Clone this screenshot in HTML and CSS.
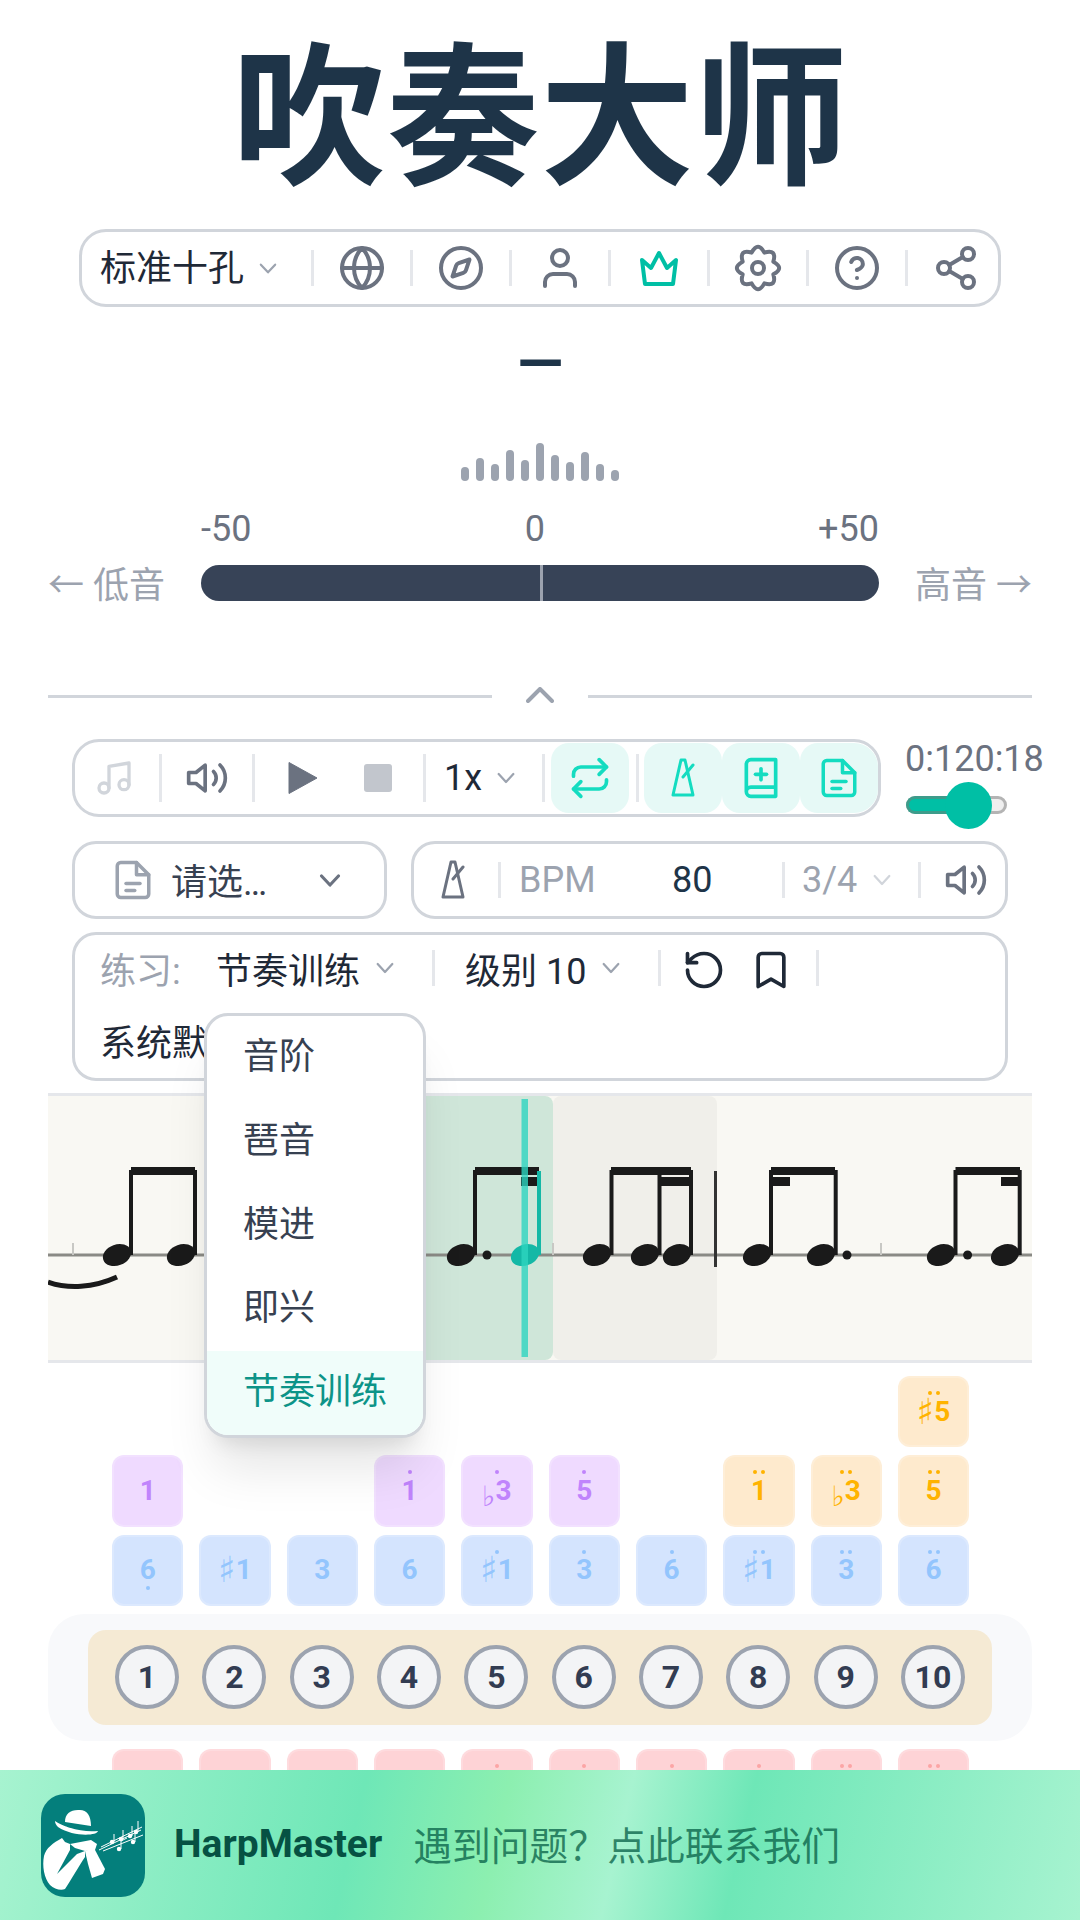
FILE: index.html
```html
<!DOCTYPE html>
<html lang="zh">
<head>
<meta charset="utf-8">
<title>吹奏大师</title>
<link rel="stylesheet" href="styles.css">
</head>
<body>
<svg class="defs" width="0" height="0" aria-hidden="true">
  <defs>
    <g id="i-vol"><path d="M11 5 6 9H2v6h4l5 4z"/><path d="M15.54 8.46a5 5 0 0 1 0 7.07"/><path d="M19.07 4.93a10 10 0 0 1 0 14.14"/></g>
    <g id="i-doc"><path d="M14 2H5a2 2 0 0 0-2 2v16a2 2 0 0 0 2 2h14a2 2 0 0 0 2-2V9z"/><path d="M14 2v7h7"/><path d="M8 14h8"/><path d="M8 18h5"/></g>
    <g id="i-metro"><path d="M10 2 2 37H22L14 2Z"/><path d="M12 19 22 7"/></g>
  </defs>
</svg>
<main class="app">
  <h1 class="title">吹奏大师</h1>

  <nav class="toolbar">
    <div class="key-select"><span>标准十孔</span><svg class="chev" viewBox="0 0 16 10"><path d="M1.5 1.5 8 8.5l6.5-7"/></svg></div>
    <i class="sep"></i>
    <div class="tool"><svg class="ic" viewBox="0 0 24 24"><circle cx="12" cy="12" r="10"/><path d="M12 2a14.5 14.5 0 0 0 0 20 14.5 14.5 0 0 0 0-20"/><path d="M2 12h20"/></svg></div>
    <i class="sep"></i>
    <div class="tool"><svg class="ic" viewBox="0 0 24 24"><circle cx="12" cy="12" r="10"/><path d="m16.24 7.76-1.804 5.411a2 2 0 0 1-1.265 1.265L7.76 16.24l1.804-5.411a2 2 0 0 1 1.265-1.265z"/></svg></div>
    <i class="sep"></i>
    <div class="tool"><svg class="ic" viewBox="0 0 24 24"><path d="M4.5 21v-2a4 4 0 0 1 4-4h7a4 4 0 0 1 4 4v2"/><circle cx="12" cy="7" r="4"/></svg></div>
    <i class="sep"></i>
    <div class="tool teal-ic"><svg class="ic" viewBox="0 0 24 24"><path d="M5 20 3.5 8 8 12l4-7.5L16 12l4.500-4L19 20Z"/></svg></div>
    <i class="sep"></i>
    <div class="tool"><svg class="ic" viewBox="0 0 24 24"><path d="M19.67 8.82Q25.5 12 19.67 15.18Q21.55 21.55 15.18 19.67Q12 25.5 8.82 19.67Q2.45 21.55 4.33 15.18Q-1.5 12 4.33 8.82Q2.45 2.45 8.82 4.33Q12 -1.5 15.18 4.33Q21.55 2.45 19.67 8.82Z"/><circle cx="12" cy="12" r="3"/></svg></div>
    <i class="sep"></i>
    <div class="tool"><svg class="ic" viewBox="0 0 24 24"><circle cx="12" cy="12" r="10"/><path d="M9.09 9a3 3 0 0 1 5.83 1c0 2-3 3-3 3"/><path d="M12 17h.01"/></svg></div>
    <i class="sep"></i>
    <div class="tool tool-last"><svg class="ic" viewBox="0 0 24 24"><circle cx="18" cy="5" r="3"/><circle cx="6" cy="12" r="3"/><circle cx="18" cy="19" r="3"/><path d="m8.59 13.51 6.83 3.98"/><path d="m15.41 6.51-6.82 3.98"/></svg></div>
  </nav>

  <div class="note-name"><span>—</span></div>

  <div class="wave">
    <i class="w14"></i><i class="w23"></i><i class="w17"></i><i class="w31"></i><i class="w21"></i><i class="w38"></i><i class="w26"></i><i class="w19"></i><i class="w29"></i><i class="w17"></i><i class="w11"></i>
  </div>

  <div class="scale"><span>-50</span><span>0</span><span>+50</span></div>
  <div class="tuner">
    <span class="side">← 低音</span>
    <div class="meter"><i></i></div>
    <span class="side side-r">高音 →</span>
  </div>

  <div class="divider"><i></i><svg class="chev-up" viewBox="0 0 28 16"><path d="M2 14 14 2l12 12"/></svg><i></i></div>

  <section class="player-row">
    <div class="player">
      <div class="p-note"><svg class="ic ic-38" viewBox="0 0 24 24"><path d="M9 18V5l12-2v13"/><circle cx="6" cy="18" r="3"/><circle cx="18" cy="16" r="3"/></svg></div>
      <i class="sep sep-tall"></i>
      <div class="p-vol"><svg class="ic ic-44" viewBox="0 0 24 24"><use href="#i-vol"/></svg></div>
      <i class="sep sep-tall"></i>
      <div class="p-play"><svg class="play" viewBox="0 0 30 34"><path d="M1 1.500V32.500L29 17Z"/></svg></div>
      <div class="p-stop"><i class="stop"></i></div>
      <i class="sep sep-tall"></i>
      <div class="p-speed"><span>1x</span><svg class="chev chev-18" viewBox="0 0 16 10"><path d="M1.5 1.5 8 8.500l6.500-7"/></svg></div>
      <i class="sep sep-tall"></i>
      <div class="on on-first"><svg class="ic ic-44" viewBox="0 0 24 24"><path d="m17 2 4 4-4 4"/><path d="M3 11v-1a4 4 0 0 1 4-4h14"/><path d="m7 22-4-4 4-4"/><path d="M21 13v1a4 4 0 0 1-4 4H3"/></svg></div>
      <i class="sep sep-tall sep-gap"></i>
      <div class="on-group">
        <div class="on"><svg class="metro" viewBox="0 0 24 40"><use href="#i-metro"/></svg></div>
        <div class="on"><svg class="ic ic-44" viewBox="0 0 24 24"><path d="M4 19.500v-15A2.500 2.500 0 0 1 6.500 2H20v20H6.500a2.500 2.500 0 0 1 0-5H20"/><path d="M9 10h6"/><path d="M12 7v6"/></svg></div>
        <div class="on on-last"><svg class="ic ic-40" viewBox="0 0 24 24"><use href="#i-doc"/></svg></div>
      </div>
    </div>
    <div class="progress">
      <div class="time">0:120:18</div>
      <div class="track"><i class="fill"></i><i class="knob"></i></div>
    </div>
  </section>

  <section class="row-two">
    <div class="file-select">
      <svg class="ic ic-40 doc-gray" viewBox="0 0 24 24"><use href="#i-doc"/></svg>
      <span class="file-name">请选…</span>
      <svg class="chev chev-22" viewBox="0 0 16 10"><path d="M1.500 1.500 8 8.500l6.500-7"/></svg>
    </div>
    <div class="bpm">
      <svg class="metro metro-gray" viewBox="0 0 24 40"><use href="#i-metro"/></svg>
      <i class="sep sep-short s1"></i>
      <span class="bpm-label">BPM</span>
      <span class="bpm-value">80</span>
      <i class="sep sep-short s2"></i>
      <span class="meter-sign">3/4</span>
      <svg class="chev chev-18 chev-pale" viewBox="0 0 16 10"><path d="M1.500 1.500 8 8.500l6.500-7"/></svg>
      <i class="sep sep-short s3"></i>
      <svg class="ic ic-44 vol-bpm" viewBox="0 0 24 24"><use href="#i-vol"/></svg>
    </div>
  </section>

  <section class="practice">
    <div class="pr-line">
      <span class="pr-label">练习:</span>
      <span class="pr-kind">节奏训练</span>
      <svg class="chev chev-18 c1" viewBox="0 0 16 10"><path d="M1.500 1.500 8 8.500l6.500-7"/></svg>
      <i class="sep sep-short g1"></i>
      <span class="pr-level">级别 10</span>
      <svg class="chev chev-18 c1" viewBox="0 0 16 10"><path d="M1.500 1.500 8 8.500l6.500-7"/></svg>
      <i class="sep sep-short g2"></i>
      <svg class="ic ic-44 dark g3" viewBox="0 0 24 24"><path d="M3 12a9 9 0 1 0 9-9 9.750 9.750 0 0 0-6.740 2.740L3 8"/><path d="M3 3v5h5"/></svg>
      <svg class="ic ic-44 dark g4" viewBox="0 0 24 24"><path d="m19 21-7-4-7 4V5a2 2 0 0 1 2-2h10a2 2 0 0 1 2 2v16z"/></svg>
      <i class="sep sep-short g5"></i>
    </div>
    <div class="pr-line pr-line-2"><span>系统默</span></div>
    <ul class="menu">
      <li>音阶</li>
      <li>琶音</li>
      <li>模进</li>
      <li>即兴</li>
      <li class="active">节奏训练</li>
    </ul>
  </section>

  <section class="score">
    <svg viewBox="0 0 984 264" width="984" height="264">
      <rect class="hl-green" x="265" y="0" width="240" height="264" rx="8"/>
      <rect class="hl-gray" x="505" y="0" width="164" height="264" rx="8"/>
      <rect class="staff" x="0" y="157.500" width="984" height="3"/>
      <rect class="tick" x="24" y="147" width="2" height="12"/>
      <rect class="tick" x="504" y="147" width="2" height="12"/>
      <rect class="tick" x="832" y="147" width="2" height="12"/>
      <path class="slur" d="M0 186C20 193 45 192 69 181"/>
      <g class="ink">
        <ellipse cx="69" cy="159" rx="14.500" ry="10.500" transform="rotate(-20 69 159)"/>
        <ellipse cx="133" cy="159" rx="14.500" ry="10.500" transform="rotate(-20 133 159)"/>
        <rect x="81" y="74" width="4" height="85"/><rect x="145" y="74" width="4" height="85"/>
        <rect x="83" y="71" width="64" height="8"/>

        <ellipse cx="413" cy="159" rx="14.500" ry="10.500" transform="rotate(-20 413 159)"/>
        <rect x="425" y="74" width="4" height="85"/>
        <rect x="427" y="71" width="64" height="8"/>
        <rect x="473" y="81" width="18" height="9"/>
        <circle cx="439" cy="159" r="4.500"/>

        <ellipse cx="549" cy="159" rx="14.500" ry="10.500" transform="rotate(-20 549 159)"/>
        <ellipse cx="597" cy="159" rx="14.500" ry="10.500" transform="rotate(-20 597 159)"/>
        <ellipse cx="629" cy="159" rx="14.500" ry="10.500" transform="rotate(-20 629 159)"/>
        <rect x="561.500" y="74" width="4" height="85"/><rect x="609.500" y="74" width="4" height="85"/><rect x="641" y="74" width="4" height="85"/>
        <rect x="563" y="71" width="80" height="8"/><rect x="611" y="81" width="31" height="9"/>

        <ellipse cx="709" cy="159" rx="14.500" ry="10.500" transform="rotate(-20 709 159)"/>
        <ellipse cx="773" cy="159" rx="14.500" ry="10.500" transform="rotate(-20 773 159)"/>
        <rect x="721" y="74" width="4" height="85"/><rect x="785.700" y="74" width="4" height="85"/>
        <rect x="723" y="71" width="64" height="8"/><rect x="723" y="81" width="19" height="9"/>
        <circle cx="799" cy="159" r="4.500"/>

        <ellipse cx="893" cy="159" rx="14.500" ry="10.500" transform="rotate(-20 893 159)"/>
        <ellipse cx="957" cy="159" rx="14.500" ry="10.500" transform="rotate(-20 957 159)"/>
        <rect x="905.500" y="74" width="4" height="85"/><rect x="969.700" y="74" width="4" height="85"/>
        <rect x="907.500" y="71" width="64.500" height="8"/><rect x="953" y="81" width="19" height="9"/>
        <circle cx="919.600" cy="159" r="4.500"/>
      </g>
      <rect class="bar" x="666" y="75" width="3" height="96"/>
      <ellipse class="note-now" cx="477" cy="159" rx="14.500" ry="10.500" transform="rotate(-20 477 159)"/>
      <rect class="note-now" x="489" y="75" width="4" height="84"/>
      <rect class="playhead" x="473.500" y="3" width="6.500" height="258"/>
    </svg>
  </section>

  <section class="keys keys-upper">
    <div class="k-gap c10"></div>
    <div class="k orange up2"><em>♯</em>5</div>

    <div class="k purple">1</div>
    <div class="k-gap c2"></div>
    <div class="k purple up">1</div>
    <div class="k purple up"><em class="flat">♭</em>3</div>
    <div class="k purple up">5</div>
    <div class="k-gap"></div>
    <div class="k orange up2">1</div>
    <div class="k orange up2"><em class="flat">♭</em>3</div>
    <div class="k orange up2">5</div>

    <div class="k blue down">6</div>
    <div class="k blue"><em>♯</em>1</div>
    <div class="k blue">3</div>
    <div class="k blue">6</div>
    <div class="k blue up"><em>♯</em>1</div>
    <div class="k blue up">3</div>
    <div class="k blue up">6</div>
    <div class="k blue up2"><em>♯</em>1</div>
    <div class="k blue up2">3</div>
    <div class="k blue up2">6</div>
  </section>

  <section class="harp">
    <div class="comb">
      <b>1</b><b>2</b><b>3</b><b>4</b><b>5</b><b>6</b><b>7</b><b>8</b><b>9</b><b>10</b>
    </div>
  </section>

  <section class="keys keys-lower">
    <div class="k red"></div>
    <div class="k red"></div>
    <div class="k red"></div>
    <div class="k red"></div>
    <div class="k red up"></div>
    <div class="k red up"></div>
    <div class="k red up"></div>
    <div class="k red up"></div>
    <div class="k red up2"></div>
    <div class="k red up2"></div>
  </section>
</main>

<footer class="banner">
  <svg class="logo" viewBox="0 0 104 103">
    <rect class="logo-bg" width="104" height="103" rx="24"/>
    <g class="logo-w">
      <path d="M24 28C24 20 29 16 37 16 45 15 50 20 50 32Z"/>
      <path d="M14 27C21 32 40 39 57 37 56 42 32 43 17 33 15 31 14 29 14 27Z"/>
      <path d="M21 44C12 49 5 54 3 62 1 72 3 84 9 91 13 95 20 97 24 95 30 86 38 72 44 63L44 57 36 60 16 80 29 56 29 50 24 48Z"/>
      <path d="M29 50 50 46 56 50 54 56 44 57 34 54Z"/>
      <path d="M44 57 53 54 64 75 62 80 51 84 47 70Z"/>
      <circle cx="71" cy="48" r="2.200"/><circle cx="80" cy="45" r="2.200"/><circle cx="89" cy="42" r="2.200"/><circle cx="95" cy="38" r="2.200"/><circle cx="78" cy="55" r="2.200"/><circle cx="92" cy="48" r="2.200"/>
    </g>
    <path class="logo-dark" d="M26 30 50 33 49 36 26 33Z"/>
    <g class="logo-line">
      <path d="M58 56 100 36"/><path d="M60 53 101 33"/><path d="M62 57 102 41"/>
      <path d="M73 48V40"/><path d="M82 45V36"/><path d="M91 42V32"/><path d="M97 38V27"/><path d="M80 55V47l6 -3"/><path d="M94 48V40"/>
    </g>
  </svg>
  <strong class="brand">HarpMaster</strong>
  <span class="help">遇到问题&#xFF1F;点此联系我们</span>
</footer>
</body>
</html>
```

FILE: styles.css
```css
* { box-sizing: border-box; }
html, body { margin: 0; padding: 0; }
body {
  width: 1080px;
  height: 1920px;
  overflow: hidden;
  background: #fff;
  color: #1f2937;
  font-family: Roboto, "Noto Sans CJK SC", sans-serif;
  font-size: 36px;
  position: relative;
}
i, em { font-style: normal; }
.defs { position: absolute; }
.app { padding: 0 48px; }

.title {
  margin: 0;
  height: 229px;
  padding-bottom: 16px;
  display: flex;
  align-items: center;
  justify-content: center;
  font-size: 154px;
  font-weight: 700;
  color: #1e3448;
  line-height: 1.3;
  font-family: "Noto Sans CJK SC", sans-serif;
}

.ic { width: 48px; height: 48px; fill: none; stroke: currentColor; stroke-width: 2; stroke-linecap: round; stroke-linejoin: round; flex: none; }
.ic-38 { width: 40px; height: 40px; }
.ic-40 { width: 42px; height: 42px; }
.ic-44 { width: 44px; height: 44px; }
.chev { width: 18px; height: 11px; fill: none; stroke: #9ca3af; stroke-width: 2; stroke-linecap: round; stroke-linejoin: round; flex: none; }
.chev-18 { width: 18px; height: 12px; }
.chev-22 { width: 22px; height: 13px; stroke: #6b7280; stroke-width: 2.400; }
.chev-pale { stroke: #d1d5db; }
.sep { display: block; width: 3px; height: 36px; background: #e5e7eb; flex: none; }
.sep-tall { height: 48px; }
.sep-short { height: 36px; }

.toolbar {
  margin: 0 31px;
  height: 78px;
  border: 3px solid #d1d5db;
  border-radius: 27px;
  display: flex;
  align-items: center;
}
.key-select { width: 229px; padding-left: 18px; display: flex; align-items: center; gap: 15px; color: #1f2937; }
.key-select span { margin-top: -6px; }
.tool { width: 96px; display: flex; justify-content: center; color: #6b7280; }
.tool-last { width: 89px; padding-left: 6px; }
.teal-ic { color: #00bfa5; }

.note-name {
  height: 136px;
  color: #1e3448;
  display: flex;
  justify-content: center;
  padding-top: 26px;
  font-size: 60px;
  font-weight: 700;
  line-height: 60px;
}

.wave { height: 38px; display: flex; align-items: flex-end; justify-content: center; gap: 7px; }
.wave i { display: block; width: 8px; background: #9ca3af; border-radius: 4px; }
.w11 { height: 11px; } .w14 { height: 14px; } .w17 { height: 17px; } .w19 { height: 19px; } .w21 { height: 21px; }
.w23 { height: 23px; } .w26 { height: 26px; } .w29 { height: 29px; } .w31 { height: 31px; } .w38 { height: 38px; }

.scale {
  margin: 27px 153px 0;
  height: 42px;
  line-height: 42px;
  display: flex;
  justify-content: space-between;
  color: #6b7280;
}
.tuner { margin-top: 15px; display: flex; align-items: center; color: #9ca3af; height: 36px; }
.side { width: 153px; flex: none; white-space: nowrap; font-size: 36px; line-height: 36px; margin-top: 6px; }
.side-r { text-align: right; }
.meter { flex: 1; height: 36px; background: #374357; border-radius: 18px; display: flex; justify-content: center; }
.meter i { display: block; width: 3px; background: #9ca3af; margin-left: 2px; }

.divider { margin-top: 85px; height: 20px; display: flex; align-items: center; justify-content: space-between; }
.divider i { display: block; width: 444px; height: 3px; background: #d1d5db; }
.chev-up { width: 28px; height: 16px; fill: none; stroke: #9ca3af; stroke-width: 4; stroke-linecap: round; stroke-linejoin: round; margin-top: -2px; }

.player-row { margin: 33px 0 0 24px; display: flex; gap: 25px; }
.player {
  width: 809px;
  height: 78px;
  border: 3px solid #d1d5db;
  border-radius: 27px;
  display: flex;
  align-items: center;
  flex: none;
}
.p-note { width: 84px; padding-right: 6px; display: flex; justify-content: center; color: #d1d5db; }
.p-vol { width: 90px; display: flex; justify-content: center; color: #6b7280; }
.p-play { width: 96px; display: flex; justify-content: center; }
.play { width: 30px; height: 34px; fill: #6b7280; stroke: #6b7280; stroke-linejoin: round; }
.p-stop { width: 54px; margin-right: 18px; display: flex; justify-content: center; }
.stop { display: block; width: 28px; height: 28px; background: #c2c6cd; border-radius: 3px; }
.p-speed { width: 116px; padding-left: 18px; display: flex; align-items: center; gap: 15px; }
.on { width: 78px; height: 70px; background: #e6f9f6; border-radius: 18px; display: flex; align-items: center; justify-content: center; color: #14dcc0; flex: none; }
.on-first { margin-left: 6px; }
.on-last { border-radius: 18px 24px 24px 18px; }
.sep-gap { margin: 0 5px 0 7px; }
.on-group { display: flex; }
.metro { width: 24px; height: 40px; fill: none; stroke: currentColor; stroke-width: 3; stroke-linecap: round; stroke-linejoin: round; flex: none; }
.progress { width: 101px; flex: none; }
.time { height: 40px; line-height: 40px; color: #6b7280; white-space: nowrap; margin-left: -1px; }
.track { position: relative; margin-top: 17px; width: 101px; height: 18px; border: 3px solid #b4b4b4; border-radius: 9px; background: #efefef; }
.fill { position: absolute; left: -3px; top: -3px; width: 60px; height: 18px; background: #00bfa5; border: 3px solid #3d9c8b; border-right: 0; border-radius: 9px 0 0 9px; }
.knob { position: absolute; left: 36px; top: -17px; width: 47px; height: 47px; border-radius: 50%; background: #00bfa5; }

.row-two { margin: 24px 0 0 24px; display: flex; gap: 24px; width: 936px; }
.file-select, .bpm { height: 78px; border: 3px solid #d1d5db; border-radius: 24px; display: flex; align-items: center; }
.file-select { width: 315px; flex: none; padding: 0 43px 0 37px; }
.doc-gray { color: #9ca3af; }
.file-name { margin: -3px 0 0 17px; color: #374151; white-space: nowrap; }
.chev-22 { margin-left: auto; }
.bpm { flex: 1; padding-left: 27px; }
.metro-gray { color: #6b7280; }
.s1 { margin-left: 33px; }
.bpm-label { margin-left: 18px; color: #9ca3af; width: 72px; }
.bpm-value { margin-left: 81px; color: #1e3448; width: 40px; }
.s2 { margin-left: 70px; }
.meter-sign { margin-left: 17px; color: #9ca3af; }
.chev-pale { margin-left: 16px; }
.s3 { margin-left: 27px; }
.vol-bpm { margin-left: 23px; color: #6b7280; }

.practice {
  position: relative;
  margin: 13px 0 0 24px;
  width: 936px;
  height: 149px;
  border: 3px solid #d1d5db;
  border-radius: 24px;
  padding-left: 25px;
}
.pr-line { height: 66px; display: flex; align-items: center; }
.pr-line-2 { margin-top: 6px; }
.pr-label { color: #9ca3af; width: 116px; flex: none; white-space: nowrap; }
.pr-kind { color: #1f2937; }
.c1 { margin-left: 16px; }
.g1 { margin-left: 38px; }
.pr-level { margin-left: 30px; white-space: nowrap; }
.g2 { margin-left: 38px; }
.dark { color: #1f2937; }
.g3 { margin: 4px 0 0 21px; }
.g4 { margin: 4px 0 0 23px; }
.g5 { margin-left: 23px; }

.menu {
  position: absolute;
  z-index: 5;
  left: 129px;
  top: 78px;
  width: 222px;
  height: 425px;
  margin: 0;
  padding: 0;
  list-style: none;
  background: #fff;
  border: 3px solid #d1d5db;
  border-radius: 24px;
  overflow: hidden;
  color: #374151;
  box-shadow: 0 40px 50px -10px rgba(0,0,0,.1), 0 16px 20px -12px rgba(0,0,0,.1);
}
.menu li { height: 83.800px; padding-left: 36px; line-height: 83px; white-space: nowrap; }
.menu .active { background: #f0fdfa; color: #0d9488; }

.score {
  margin-top: 12px;
  height: 270px;
  background: #f9f8f3;
  border-top: 3px solid #e5e7eb;
  border-bottom: 3px solid #e5e7eb;
}
.score svg { display: block; }
.hl-green { fill: #cfe6d9; }
.hl-gray { fill: #f0efea; }
.staff { fill: #8a8a85; }
.tick { fill: #c8c8c4; }
.slur { fill: none; stroke: #1a1a1a; stroke-width: 5; }
.ink { fill: #1a1a1a; }
.bar { fill: #333; }
.note-now { fill: #14b8a6; }
.playhead { fill: #2dd4bf; fill-opacity: .8; }

.keys {
  margin: 0 0 0 64px;
  display: grid;
  grid-template-columns: repeat(10, 71.330px);
  grid-auto-rows: 71.330px;
  gap: 8px 16px;
}
.keys-upper { margin-top: 13px; }
.keys-lower { margin-top: 8px; }
.k-gap { grid-column: span 1; }
.c10 { grid-column: span 9; }
.c2 { grid-column: span 2; }
.k {
  position: relative;
  border-radius: 12px;
  border: 2px solid rgba(255,255,255,.2);
  display: flex;
  align-items: center;
  justify-content: center;
  font-size: 28px;
  font-weight: 700;
  line-height: 1;
}
.k em { font-family: "DejaVu Sans", sans-serif; font-weight: 400; font-size: 36px; }
.k em.flat { font-size: 28px; align-self: flex-end; margin-bottom: 14px; }
.up::before, .up2::before, .down::before {
  content: "";
  position: absolute;
  left: 50%;
  margin-left: -2px;
  width: 4px;
  height: 4px;
  border-radius: 50%;
}
.up::before { top: 13px; background: currentColor; }
.down::before { bottom: 14px; background: currentColor; }
.up2::before { top: 13px; box-shadow: -4px 0 currentColor, 4px 0 currentColor; }
.purple { background: #efdaff; color: #c084fc; }
.blue { background: #d4e4fe; color: #93c5fd; }
.orange { background: #feeacd; color: #ffb300; }
.red { background: #fed3d6; color: #fca5a5; }

.harp { margin-top: 8px; height: 127px; background: #f8f9fb; border-radius: 36px; padding: 16px 40px; }
.comb { height: 95px; background: #f5ead4; border-radius: 18px; padding-left: 27px; display: flex; align-items: center; gap: 23.330px; }
.comb b {
  width: 64px;
  height: 64px;
  flex: none;
  border-radius: 50%;
  border: 4.500px solid #9ca3af;
  background: #f3f4f6;
  display: flex;
  align-items: center;
  justify-content: center;
  color: #323c52;
  font-size: 32px;
  font-weight: 700;
  line-height: 1;
}

.banner {
  position: absolute;
  z-index: 10;
  left: 0;
  right: 0;
  bottom: 0;
  height: 150px;
  display: flex;
  align-items: center;
  padding-left: 41px;
  background: linear-gradient(103deg, #a7f3d0 0%, #6ee7b7 33%, #8cefb0 46%, #a7f3d0 57%, #6ee7b7 68%, #a7f3d0 100%);
}
.logo { width: 104px; height: 103px; flex: none; }
.logo-bg { fill: #047f7c; }
.logo-w { fill: #fff; }
.logo-dark { fill: #047f7c; }
.logo-line { fill: none; stroke: #fff; stroke-width: 1; }
.brand { margin-left: 29px; color: #065143; font-size: 39px; font-weight: 700; white-space: nowrap; margin-top: -2px; }
.help { margin: -4px 0 0 31px; font-size: 38.800px; color: rgba(6,95,70,.75); white-space: nowrap; }
```
